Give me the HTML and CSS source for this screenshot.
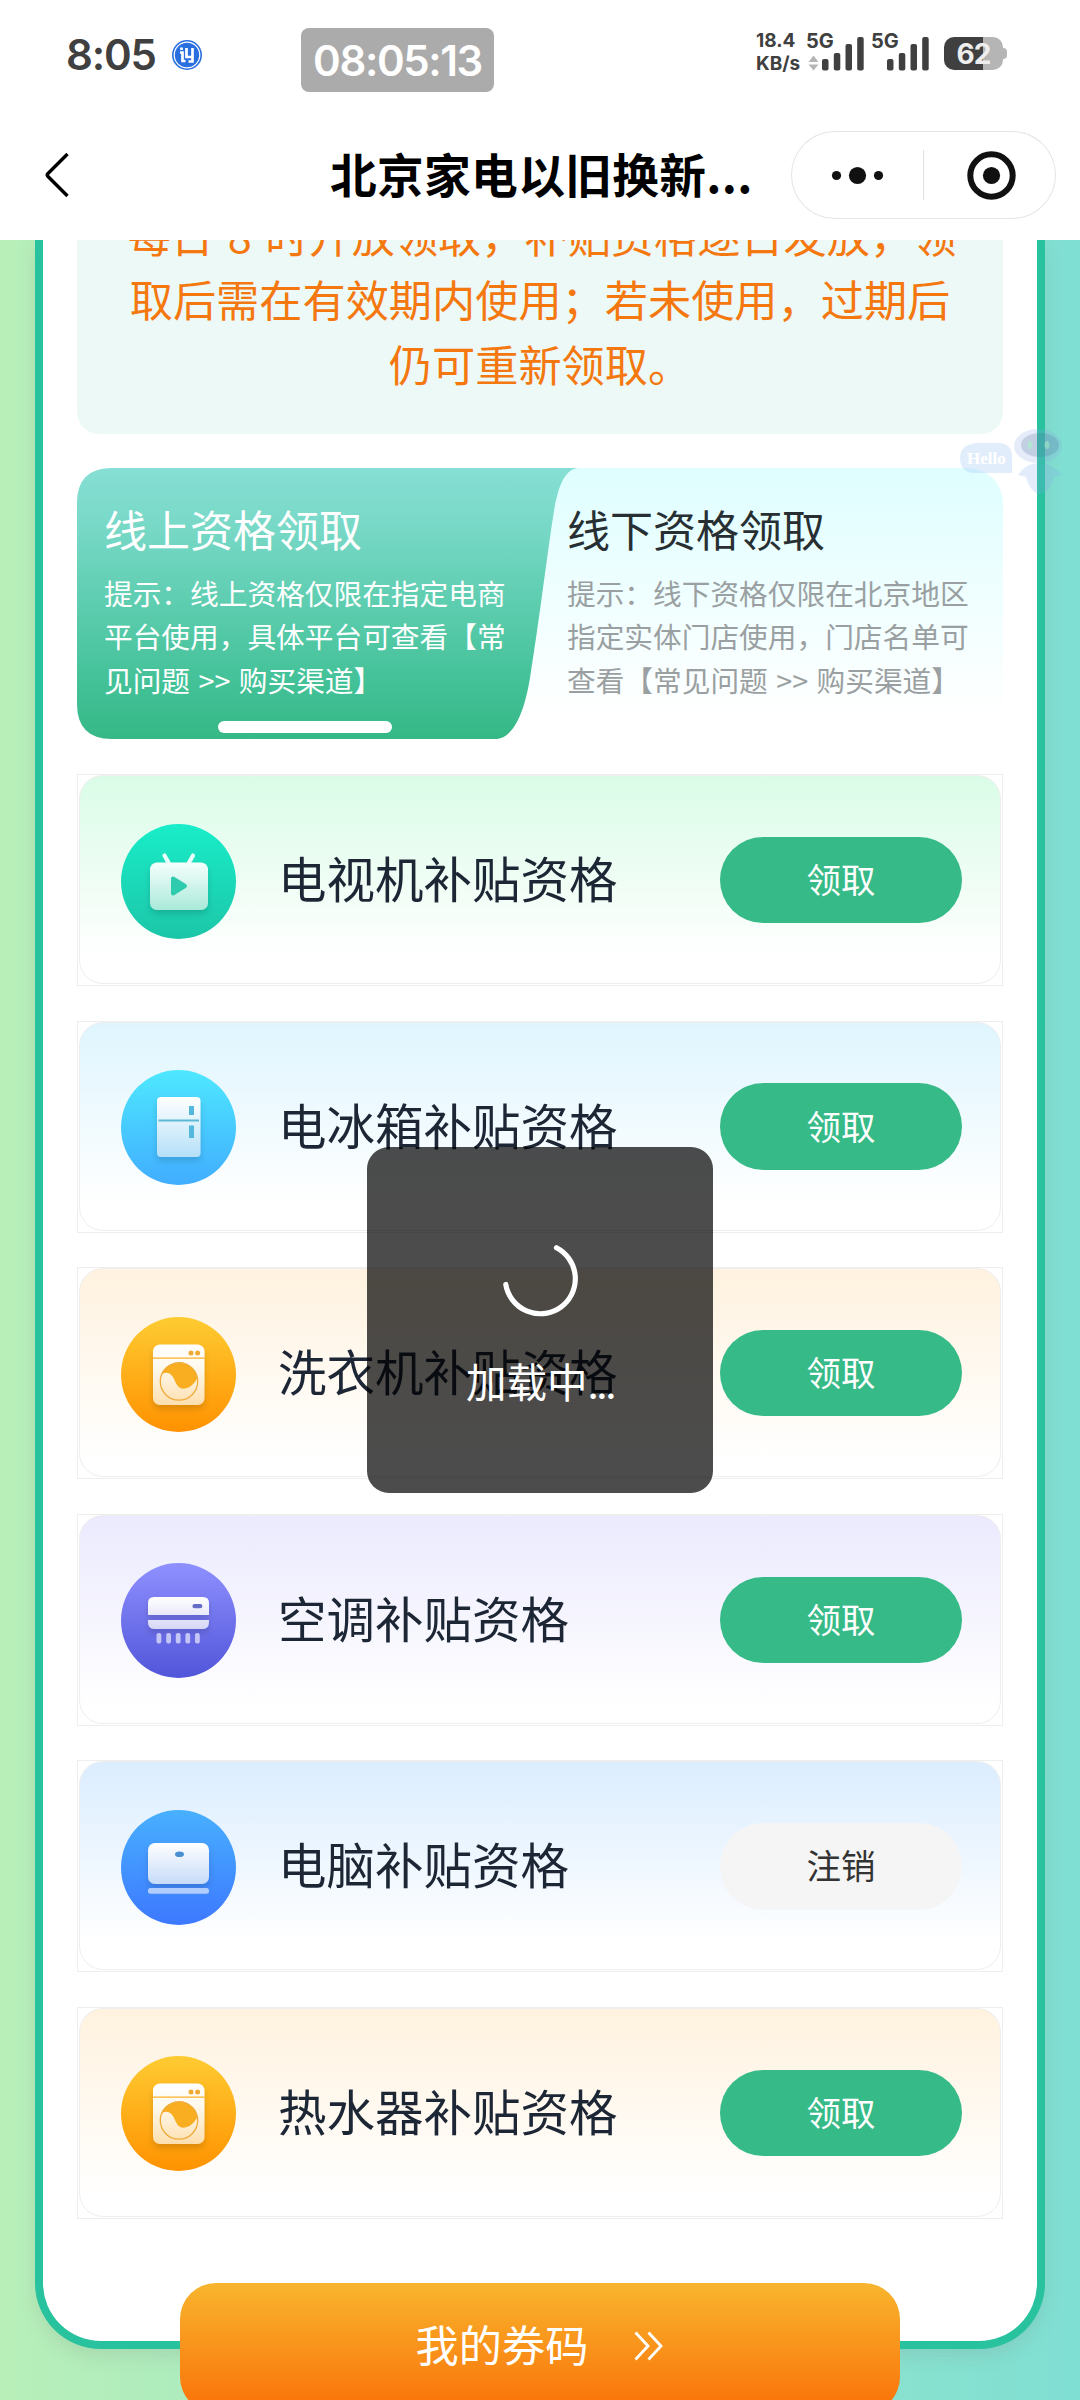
FILE: index.html
```html
<!DOCTYPE html>
<html lang="zh-CN">
<head>
<meta charset="utf-8">
<title>北京家电以旧换新</title>
<link rel="stylesheet" href="styles.css">
</head>
<body>
<svg class="defs" width="0" height="0" aria-hidden="true">
  <defs>
    <linearGradient id="g-tv" x1="0" y1="0" x2="0" y2="1"><stop offset="0" stop-color="#19edc9"/><stop offset="1" stop-color="#1cc6a8"/></linearGradient>
    <linearGradient id="g-fridge" x1="0" y1="0" x2="0" y2="1"><stop offset="0" stop-color="#4ee8ff"/><stop offset="1" stop-color="#41adff"/></linearGradient>
    <linearGradient id="g-wash" x1="0" y1="0" x2="0" y2="1"><stop offset="0" stop-color="#fecb32"/><stop offset="1" stop-color="#ff9200"/></linearGradient>
    <linearGradient id="g-ac" x1="0" y1="0" x2="0" y2="1"><stop offset="0" stop-color="#8f90ff"/><stop offset="1" stop-color="#5155d9"/></linearGradient>
    <linearGradient id="g-pc" x1="0" y1="0" x2="0" y2="1"><stop offset="0" stop-color="#48b0ff"/><stop offset="1" stop-color="#3d78ff"/></linearGradient>
    <linearGradient id="w-tv" x1="0" y1="0" x2="0" y2="1"><stop offset="0" stop-color="#f6fffd"/><stop offset="1" stop-color="#a9e9d9"/></linearGradient>
    <linearGradient id="w-fridge" x1="0" y1="0" x2="0" y2="1"><stop offset="0" stop-color="#fff"/><stop offset="1" stop-color="#b4e0f8"/></linearGradient>
    <linearGradient id="w-wash" x1="0" y1="0" x2="0" y2="1"><stop offset="0" stop-color="#fff"/><stop offset=".35" stop-color="#fffaf0"/><stop offset="1" stop-color="#fddfae"/></linearGradient>
    <linearGradient id="w-ac" gradientUnits="userSpaceOnUse" x1="0" y1="34" x2="0" y2="66"><stop offset="0" stop-color="#fff"/><stop offset="1" stop-color="#d6d7f5"/></linearGradient>
    <linearGradient id="w-pc" x1="0" y1="0" x2="0" y2="1"><stop offset="0" stop-color="#fff"/><stop offset="1" stop-color="#c6dbf8"/></linearGradient>
    <linearGradient id="g-tab" x1="0" y1="0" x2="0" y2="1"><stop offset="0" stop-color="#86dfd4"/><stop offset=".2" stop-color="#79d9c8"/><stop offset=".8" stop-color="#42c197"/><stop offset="1" stop-color="#36b886"/></linearGradient>
    <filter id="drop" x="-20%" y="-20%" width="140%" height="150%"><feDropShadow dx="0" dy="4" stdDeviation="3" flood-color="#000" flood-opacity=".14"/></filter>
    <symbol id="washer" viewBox="0 0 115 115">
      <circle cx="57.5" cy="57.5" r="57.5" fill="url(#g-wash)"/>
      <rect x="32" y="27.5" width="51.5" height="60.5" rx="7" fill="url(#w-wash)" filter="url(#drop)"/>
      <path d="M32 41.2h51.5" stroke="#fbb02a" stroke-width="1.3"/>
      <circle cx="70" cy="36" r="2.5" fill="#edaa36"/><circle cx="76.6" cy="36" r="2.5" fill="#edaa36"/>
      <path d="M40.500 58A18.500 18.500 0 0 1 76.400 61C73 67 69 71.700 61.500 71.700C52.500 70 55 56 45 55.700Q42.500 55.700 40.500 58Z" fill="#f9ae22"/>
      <circle cx="58" cy="64.500" r="18.700" fill="none" stroke="#efac3c" stroke-width="1.300"/>
    </symbol>
  </defs>
</svg>
<div class="phone">
  <header class="status">
    <div class="status-left">
      <span class="clock">8:05</span>
      <svg class="app-dot" viewBox="0 0 30 30"><circle cx="15" cy="15" r="15" fill="#2a6fe0"/><circle cx="15" cy="15" r="12.800" fill="none" stroke="#fff" stroke-width="1.200"/><path d="M9.500 7.500v2.500M8 12.500h2.500v8.500h3M14.500 8v9h5M20.500 8v13.500h-4" fill="none" stroke="#fff" stroke-width="2.700"/></svg>
    </div>
    <div class="timer">08:05:13</div>
    <div class="status-right">
      <div class="speed"><span>18.4</span><span>KB/s</span></div>
      <svg class="signals" viewBox="0 0 128 44" width="128" height="44">
        <text x="0" y="17.500" class="net">5G</text>
        <text x="65" y="17.500" class="net">5G</text>
        <path d="M2.500 32l5-6.500 5 6.500zM2.500 34.500h10l-5 6z" fill="#b5b5b5"/>
        <g fill="#404040"><rect x="16" y="29" width="6.500" height="11.500" rx="2"/><rect x="27.800" y="23" width="6.500" height="17.500" rx="2"/><rect x="39.500" y="14" width="6.500" height="26.500" rx="2"/><rect x="51.200" y="7" width="6.500" height="33.500" rx="2"/><rect x="81" y="29" width="6.500" height="11.500" rx="2"/><rect x="92.800" y="23" width="6.500" height="17.500" rx="2"/><rect x="104.500" y="14" width="6.500" height="26.500" rx="2"/><rect x="116.200" y="7" width="6.500" height="33.500" rx="2"/></g>
      </svg>
      <div class="battery"><span>62</span></div>
    </div>
  </header>
  <nav class="nav">
    <svg class="back" viewBox="0 0 26 48"><path d="M23.500 3L4 22.500Q2.500 24 4 25.500L23.500 45" fill="none" stroke="#000" stroke-width="3.400"/></svg>
    <h1 class="nav-title">北京家电以旧换新...</h1>
    <div class="capsule">
      <svg width="132" height="88" viewBox="0 0 132 88"><g fill="#111"><circle cx="45.500" cy="44.500" r="4.600"/><circle cx="66.500" cy="44.500" r="8.600"/><circle cx="87.500" cy="44.500" r="4.600"/></g></svg>
      <i class="capsule-line"></i>
      <svg width="132" height="88" viewBox="0 0 132 88"><circle cx="67.500" cy="44.500" r="21.200" fill="none" stroke="#111" stroke-width="6"/><circle cx="67.500" cy="44.500" r="8.600" fill="#111"/></svg>
    </div>
  </nav>
  <main class="page">
    <section class="sheet">
      <div class="notice"><p><span class="first-line">每日 8 时开放领取，补贴资格逐日发放，领</span><br>取后需在有效期内使用；若未使用，过期后<br>仍可重新领取。</p></div>
      <div class="tabs">
        <svg class="tab-shape" viewBox="0 0 502 271"><path d="M35 0H502C486 0 480 25 477 43C471 80 462 155 453 210C448 240 438 271 418 271H35Q0 271 0 236V35Q0 0 35 0Z" fill="url(#g-tab)"/></svg>
        <div class="tab tab-on"><h2>线上资格领取</h2><p>提示：线上资格仅限在指定电商<br>平台使用，具体平台可查看【常<br>见问题 &gt;&gt; 购买渠道】</p><i class="tab-bar"></i></div>
        <div class="tab"><h2>线下资格领取</h2><p>提示：线下资格仅限在北京地区<br>指定实体门店使用，门店名单可<br>查看【常见问题 &gt;&gt; 购买渠道】</p></div>
      </div>
      <div class="list">
        <div class="item"><div class="card green">
          <svg class="icon" viewBox="0 0 115 115"><circle cx="57.500" cy="57.500" r="57.500" fill="url(#g-tv)"/><path d="M43.500 31.500l4.500 8M72 31.500l-4.500 8" stroke="#e9fffa" stroke-width="4.200" stroke-linecap="round"/><rect x="29" y="38.500" width="58" height="47.500" rx="7" fill="url(#w-tv)" filter="url(#drop)"/><path d="M52 54.500v15l12-7.500z" fill="#2fcbae" stroke="#2fcbae" stroke-width="4" stroke-linejoin="round"/></svg>
          <span class="name">电视机补贴资格</span><button class="btn">领取</button></div></div>
        <div class="item"><div class="card cyan">
          <svg class="icon" viewBox="0 0 115 115"><circle cx="57.500" cy="57.500" r="57.500" fill="url(#g-fridge)"/><rect x="36" y="27" width="43.500" height="60" rx="4" fill="url(#w-fridge)" filter="url(#drop)"/><path d="M37.500 50.500h40.500" stroke="#5bb9d6" stroke-width="2"/><path d="M68 36h5v9h-5zM68 55.500h5v12.500h-5z" fill="#54b8dc"/></svg>
          <span class="name">电冰箱补贴资格</span><button class="btn">领取</button></div></div>
        <div class="item"><div class="card amber">
          <svg class="icon"><use href="#washer"/></svg>
          <span class="name">洗衣机补贴资格</span><button class="btn">领取</button></div></div>
        <div class="item"><div class="card violet">
          <svg class="icon" viewBox="0 0 115 115"><circle cx="57.500" cy="57.500" r="57.500" fill="url(#g-ac)"/><g filter="url(#drop)"><path d="M27 52V40q0-6 6-6h49q6 0 6 6v12zM27 57h61v2q0 7-6 7H33q-6 0-6-7z" fill="url(#w-ac)"/></g><rect x="71.500" y="41" width="9.800" height="4.200" rx="2" fill="#656cc6"/><g fill="#c3c5f6"><rect x="35.500" y="70" width="4.800" height="10.500" rx="2"/><rect x="45.200" y="70" width="4.800" height="10.500" rx="2"/><rect x="54.800" y="70" width="4.800" height="10.500" rx="2"/><rect x="64.400" y="70" width="4.800" height="10.500" rx="2"/><rect x="74" y="70" width="4.800" height="10.500" rx="2"/></g></svg>
          <span class="name">空调补贴资格</span><button class="btn">领取</button></div></div>
        <div class="item"><div class="card blue">
          <svg class="icon" viewBox="0 0 115 115"><circle cx="57.500" cy="57.500" r="57.500" fill="url(#g-pc)"/><rect x="27" y="33" width="61" height="41" rx="7" fill="url(#w-pc)" filter="url(#drop)"/><ellipse cx="58.500" cy="44.300" rx="4.500" ry="2.800" fill="#4a90d0"/><rect x="27" y="78" width="61" height="5.800" rx="2.500" fill="#b1cdfd"/></svg>
          <span class="name">电脑补贴资格</span><button class="btn btn-off">注销</button></div></div>
        <div class="item"><div class="card amber">
          <svg class="icon"><use href="#washer"/></svg>
          <span class="name">热水器补贴资格</span><button class="btn">领取</button></div></div>
      </div>
    </section>
    <a class="codes"><span>我的券码</span><svg viewBox="0 0 30 30" width="30" height="30"><path d="M1.500 1.500L14 15 1.500 28.500M14.500 1.500L27 15 14.500 28.500" fill="none" stroke="#fff" stroke-width="2.800"/></svg></a>
  </main>
  <svg class="helper" viewBox="0 0 110 76" width="110" height="76">
    <path d="M18 18h22q14 0 14 14v16H14Q2 46 2 33T18 18z" fill="#9fc3f5" opacity=".3"/>
    <text x="9" y="39" class="hello">Hello</text>
    <ellipse cx="80" cy="21" rx="24" ry="17" fill="#8aa6e0" opacity=".22"/>
    <ellipse cx="82" cy="20" rx="19" ry="12" fill="#4a6f9a" opacity=".22"/>
    <ellipse cx="72" cy="20" rx="2.500" ry="4" fill="#a8f0c8" opacity=".6"/><ellipse cx="89" cy="20" rx="2.500" ry="4" fill="#a8f0c8" opacity=".5"/>
    <path d="M60 50Q68 38 81 38T105 50L96 52Q93 66 81 70Q71 65 68 52z" fill="#7fa8ea" opacity=".22"/>
  </svg>
  <div class="toast">
    <svg viewBox="0 0 80 80" width="80" height="80"><path d="M56.500 8.700A35 35 0 1 1 5.800 45.500" fill="none" stroke="#fff" stroke-width="5.200" stroke-linecap="round"/></svg>
    <span>加载中<span class="dots">...</span></span>
  </div>
</div>
</body>
</html>
```
FILE: styles.css
```css
* { box-sizing: border-box; }
body { margin: 0; font-family: "Noto Sans CJK SC", "Noto Sans", sans-serif; }
h1, h2, p { margin: 0; font-weight: 400; }
.defs { position: absolute; }
.phone { position: relative; width: 1080px; height: 2400px; overflow: hidden; background: #fff; display: flex; flex-direction: column; }

.status { height: 110px; flex: none; display: grid; grid-template-columns: 301px 193px 1fr; color: #404040; font-family: Inter, "Noto Sans CJK SC", sans-serif; }
.status-left { display: flex; align-items: flex-start; padding: 40px 0 0 66px; gap: 20px; }
.clock { width: 86px; font-size: 42px; line-height: 30px; font-weight: 600; letter-spacing: -1.200px; white-space: nowrap; }
.app-dot { width: 30px; height: 30px; }
.timer { margin-top: 28px; height: 64px; border-radius: 8px; background: #ababab; color: #fff; font-size: 42px; font-weight: 600; line-height: 65px; letter-spacing: -1.400px; text-align: center; white-space: nowrap; }
.status-right { display: flex; align-items: flex-start; padding: 30px 0 0 262px; }
.speed { width: 50px; display: flex; flex-direction: column; font-size: 19px; font-weight: 700; line-height: 22.500px; }
.signals { flex: none; }
.net { font: 700 20px Inter, sans-serif; fill: #404040; }
.battery { position: relative; margin: 7px 0 0 10px; width: 59px; height: 33px; border-radius: 10px; background: linear-gradient(90deg, #404040 39px, #b5b5b5 39px); color: #eee; font-size: 28px; font-weight: 700; line-height: 34px; letter-spacing: -1px; text-align: center; }
.battery::after { content: ""; position: absolute; left: 59px; top: 11px; width: 4px; height: 11px; border-radius: 0 4px 4px 0; background: #b5b5b5; }

.nav { height: 130px; flex: none; display: flex; align-items: center; padding: 0 24px 0 44px; }
.back { width: 26px; height: 48px; }
.nav-title { margin-left: 260px; width: 461px; padding-bottom: 5px; font-size: 46.700px; font-weight: 700; line-height: 60px; letter-spacing: .35px; color: #000; white-space: nowrap; }
.capsule { width: 265px; height: 88px; display: flex; align-items: center; border-radius: 44px; box-shadow: inset 0 0 0 1px #e5e5e5; }
.capsule svg { flex: none; }
.capsule-line { width: 1px; height: 50px; background: #e0e0e0; }

.page { position: relative; flex: 1; overflow: hidden; background: linear-gradient(90deg, #b8efb9, #7fdfd3); padding: 0 35px; }
.sheet { height: 2109px; background: #fff; border: 8px solid #28c29e; border-top: 0; border-radius: 0 0 66px 66px; padding: 0 34px; box-shadow: 0 8px 18px rgba(120, 120, 120, .16); }
.notice { height: 194px; border-radius: 0 0 22px 22px; background: #ecf9f7; overflow: hidden; display: flex; align-items: flex-end; justify-content: center; padding-bottom: 39px; }
.notice p { font-size: 43.200px; line-height: 64.500px; color: #f4780f; text-align: center; white-space: nowrap; }
.first-line { word-spacing: 4px; padding-left: 4px; }

.tabs { position: relative; margin-top: 34px; height: 271px; display: grid; grid-template-columns: 463px 1fr; border-radius: 35px; background: linear-gradient(#dffeff, #fff 92%); }
.tab-shape { position: absolute; left: 0; top: 0; width: 502px; height: 271px; }
.tab { position: relative; padding: 29px 0 0 27px; color: #9aa0a1; white-space: nowrap; }
.tab h2 { font-size: 43px; line-height: 62px; color: #272f33; }
.tab p { font-size: 28.700px; line-height: 43.300px; margin-top: 12px; word-spacing: 2px; }
.tab-on, .tab-on h2 { color: #fff; }
.tab-bar { position: absolute; left: 141px; top: 253px; width: 174px; height: 12px; border-radius: 6px; background: #fff; }

.list { margin-top: 35px; display: flex; flex-direction: column; gap: 34.600px; }
.item { height: 212px; padding: 0 1px 1px; border: 1px solid #eee; }
.card { height: 100%; border: 1.500px solid #eee; border-radius: 24px; padding: 0 38px 0 41px; display: flex; align-items: center; }
.icon { width: 115px; height: 115px; flex: none; margin-top: 3px; }
.name { margin-left: 42px; flex: 1; padding-bottom: 5px; font-size: 48.500px; line-height: 70px; color: #1c2635; white-space: nowrap; }
.btn { width: 242px; height: 86.400px; border: 0; border-radius: 44px; background: #36ba87; color: #fff; font: 34.500px/82px "Noto Sans CJK SC", sans-serif; padding: 0 0 4px; text-align: center; margin-top: 1px; }
.btn-off { background: #f5f5f5; color: #333; }
.green { background: linear-gradient(#dafce7, #fff 88%); }
.cyan { background: linear-gradient(#dff5fe, #fff 88%); }
.amber { background: linear-gradient(#fff2df, #fff 92%); }
.violet { background: linear-gradient(#ebeafe, #fff 92%); }
.blue { background: linear-gradient(#dbedff, #fff 88%); }

.codes { position: absolute; left: 180px; top: 2043px; width: 720px; height: 130px; border-radius: 36px; background: linear-gradient(#f8b52d, #fa7008); display: flex; align-items: center; justify-content: center; gap: 46px; color: #fff; font-size: 43.200px; line-height: 60px; padding-bottom: 4px; }
.codes span { padding-bottom: 6px; }
.helper { position: absolute; left: 958px; top: 425px; }
.hello { font: 700 17px "Liberation Serif", serif; fill: #fff; }
.toast { position: absolute; left: 367px; top: 1147px; width: 346px; height: 346px; border-radius: 22px; background: rgba(0, 0, 0, .7); display: flex; flex-direction: column; align-items: center; padding-top: 92px; color: #fff; font-size: 40.500px; line-height: 60px; gap: 32px; }
.dots { letter-spacing: -2.500px; }
```
